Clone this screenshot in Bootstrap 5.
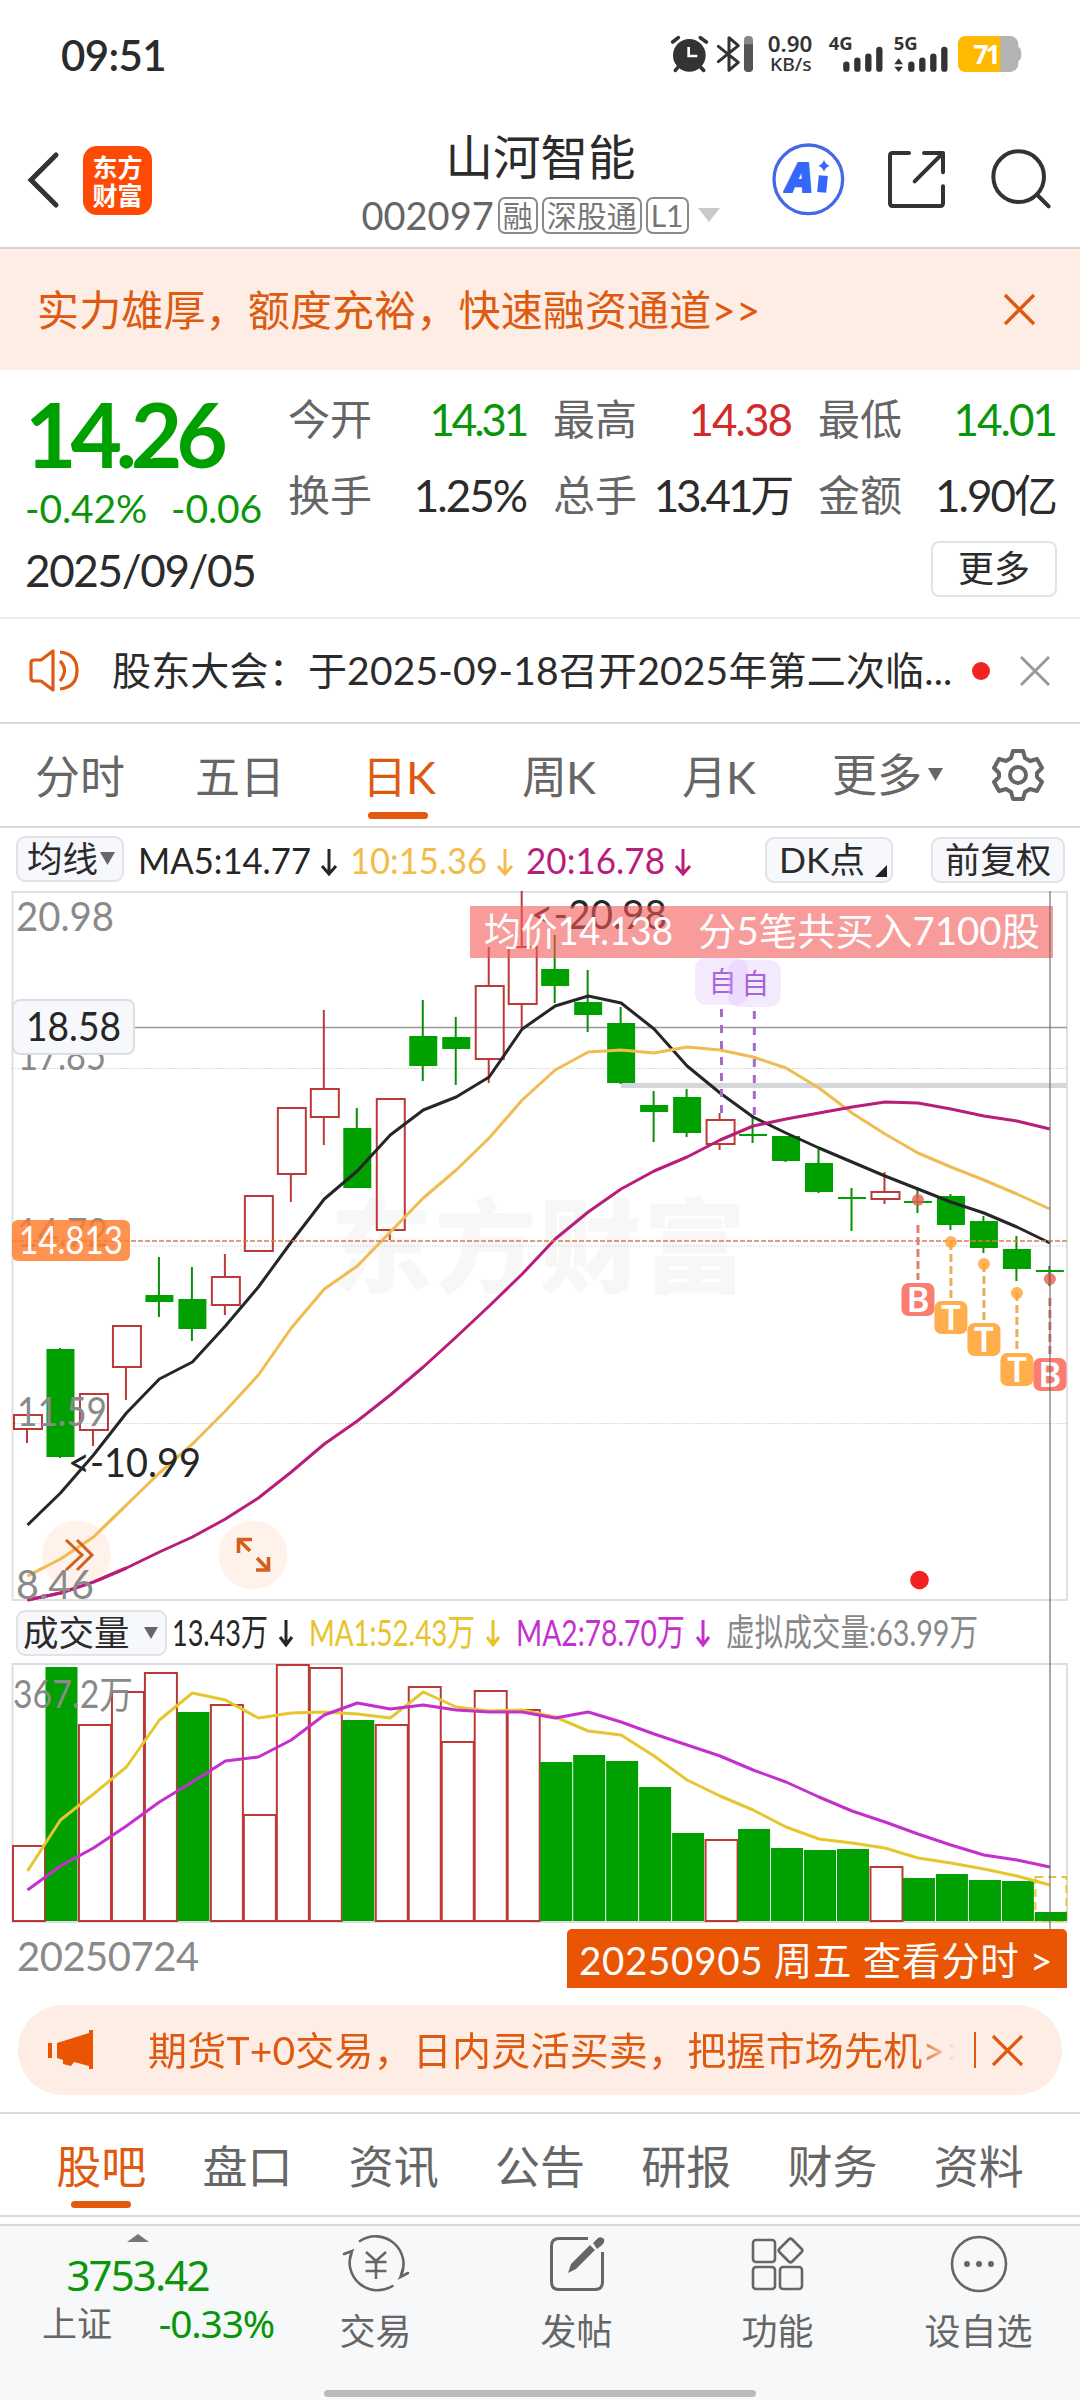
<!DOCTYPE html>
<html lang="zh-CN">
<head>
<meta charset="utf-8">
<meta name="viewport" content="width=device-width, initial-scale=1">
<title>山河智能 002097</title>
<link rel="stylesheet" href="https://cdn.jsdelivr.net/npm/bootstrap@5.3.0/dist/css/bootstrap.min.css">
<style>
:root{--up:#d32b2b;--down:#0a960a;--brand:#de5a11;--ink:#2b2b2b;--dim:#666;--line:#d9d9d9;--soft:#fdede4}
body{width:1080px;height:2400px;overflow:hidden;background:#fff;color:var(--ink);font-family:Lato,"Noto Sans CJK SC",sans-serif;font-size:42px;line-height:1;white-space:nowrap}
svg{display:block;flex:none;overflow:visible}
.down{color:var(--down)}.up{color:var(--up)}.dim{color:var(--dim)}.brand{color:var(--brand)}
.statusbar{height:109px;padding:0 59px 0 61px}
.clock{font-weight:600;font-size:42px;letter-spacing:-.6px}
.titlebar{height:140px;padding-top:4px;border-bottom:2px solid #d3d3d3}
.logo{width:69px;height:69px;border-radius:14px;background:#ff4a05;color:#fff;font:700 25px/28px "Noto Sans CJK SC",sans-serif;margin-left:23px}
.stock-name{font-size:47.5px;line-height:64px}
.code-row{font-size:38px;line-height:40px;height:40px;color:var(--dim)}
.mini-tag{border:2px solid #8a8a8a;border-radius:7px;height:37px;font-size:30px;line-height:32px;padding:0 3px;margin-left:4px;color:#777}
.promo{height:121px;background:var(--soft);font-size:42px;letter-spacing:.15px;padding:0 44px 0 37px}
.quote{height:249px;border-bottom:2px solid #ececec;padding:20px 24px 0 25px}
.big-price{font-size:89px;font-weight:700;line-height:88px;letter-spacing:-6.2px;color:#00a000}
.change{font-size:39px;line-height:60px;letter-spacing:-.1px}
.day{font-size:44px;line-height:64px;letter-spacing:-1.35px}
.facts{width:768px;margin-top:-9px}
.fact{width:238px;font-size:44px;line-height:76px;letter-spacing:-2px}
.fact .tight{letter-spacing:-3.2px}
.fact .dim{font-size:42px;letter-spacing:0}
.more-btn{width:126px;height:56px;border:2px solid #e2e2e2;border-radius:8px;font-size:36px;line-height:50px;text-align:center;color:var(--ink);margin:8px -1px 0 0}
.notice{height:105px;border-bottom:2px solid var(--line);padding:0 29px;font-size:39px}
.dot{width:18px;height:18px;border-radius:50%;background:#f02222}
.periods{height:104px;border-bottom:2px solid var(--line);font-size:45px;color:var(--dim);padding-left:35px}
.period{height:100%;line-height:106px;position:relative}
.active-tab{color:var(--brand)}
.active-tab::after{content:"";position:absolute;left:50%;margin-left:-30px;bottom:7px;width:60px;height:7px;border-radius:4px;background:#e35a0e}
.legend-row{height:63px;padding:0 15px 0 16px}
.chip{background:#f6f8fb;border:2px solid #e0e3e7;border-radius:9px;height:46px;line-height:42px;font-size:35.5px;color:var(--ink)}
.crosshair{position:absolute;left:1049px;top:63px;width:2px;height:1038px;background:rgba(100,100,100,.55)}
.dates{height:68px;padding:7px 13px 0 17px;font-size:40px;color:#8a8a8a}
.day-link{width:500px;height:59px;background:#ea5504;color:#fff;border-radius:5px 5px 0 0;font-size:38.5px;line-height:62px;letter-spacing:.7px;padding-left:12px;white-space:pre}
.futures{height:90px;margin:15px 18px 17px;background:var(--soft);border-radius:45px;padding-left:29px}
.fade-text{width:812px;overflow:hidden;font-size:39px;letter-spacing:.2px;line-height:90px;-webkit-mask-image:linear-gradient(90deg,#000 768px,transparent 808px);mask-image:linear-gradient(90deg,#000 768px,transparent 808px)}
.sections{height:105px;border-top:2px solid var(--line);border-bottom:2px solid var(--line);font-size:45px;color:var(--dim);padding:0 28px;margin-bottom:7px}
.section-tab{flex:1;text-align:center;line-height:106px;position:relative}
.dock{height:176px;background:#f7f8fa;border-top:2px solid #d6d8da;color:var(--dim);position:relative}
.index{width:275px;font-family:"Noto Sans","Noto Sans CJK SC",sans-serif}
.index-value{font-size:42px;line-height:48px;letter-spacing:-1.9px;margin-top:9px}
.index-sub{font-size:35px;line-height:50px;padding:0 1px 0 42px}
.index-sub .down{font-size:39px;letter-spacing:-1.2px;margin-top:-2px}
.dock-item{width:201px;font-size:36px;padding-top:8px}
.dock-item span{margin-top:15px;line-height:44px}
.homebar{position:absolute;left:324px;bottom:3px;width:432px;height:7px;border-radius:4px;background:#b9bbbd}
</style>
</head>
<body>
<div class="statusbar d-flex justify-content-between align-items-center">
  <div class="clock">09:51</div>
  <svg width="380" height="60" viewBox="0 0 1140 180" style="margin-right:-20px" fill="#333">
    <circle cx="85" cy="91" r="49"/><path d="M35 51L52 38M118 38L136 51M50 128L43 136M120 128L128 136" stroke="#333" stroke-width="11" stroke-linecap="round"/><path d="M83 66V93H109" fill="none" stroke="#fff" stroke-width="8"/>
    <path d="M172 64L232 112L204 136V38L232 62L172 110" fill="none" stroke="#333" stroke-width="9" stroke-linejoin="round" stroke-linecap="round"/>
    <rect x="249" y="33" width="27" height="108" rx="12" fill="#888"/><path d="M249 58H276V129Q276 141 262 141Q249 141 249 129Z" fill="#555"/>
    <g font-family="Noto Sans" font-weight="600"><text x="320" y="80" font-size="62" textLength="134" lengthAdjust="spacingAndGlyphs">0.90</text><text x="327" y="137" font-size="56" font-weight="500" textLength="125" lengthAdjust="spacingAndGlyphs">KB/s</text>
    <text x="503" y="74" font-size="54" font-weight="700" textLength="72" lengthAdjust="spacingAndGlyphs">4G</text><text x="698" y="74" font-size="54" font-weight="700" textLength="72" lengthAdjust="spacingAndGlyphs">5G</text></g>
    <g stroke="#333" stroke-width="19" stroke-linecap="round"><path d="M556 119V131M589 107V131M622 95V131M655 75V131M751 119V131M784 107V131M817 95V131M850 75V131"/></g>
    <path d="M700 118L713 100L726 118ZM700 125L713 141L726 125Z"/>
    <rect x="891" y="33" width="181" height="108" rx="25" fill="#b3b3b3"/><path d="M1070 66Q1081 66 1081 87Q1081 108 1070 108Z" fill="#b3b3b3"/><path d="M1018 33V141H916Q891 141 891 116V58Q891 33 916 33Z" fill="#ffb900"/>
    <text x="937" y="116" font-family="Noto Sans" font-size="80" font-weight="700" fill="#fff" textLength="82">71</text>
  </svg>
</div>

<header class="titlebar d-flex align-items-center">
  <div class="d-flex align-items-center" style="width:363px">
    <svg width="33" height="56" viewBox="0 0 33 56" style="margin-left:27px"><path d="M29 3L4 28L29 53" fill="none" stroke="#333" stroke-width="5" stroke-linecap="round"/></svg>
    <div class="logo text-center d-flex flex-column justify-content-center"><span>东方</span><span>财富</span></div>
  </div>
  <div class="d-flex flex-column align-items-center" style="width:355px">
    <div class="stock-name">山河智能</div>
    <div class="code-row d-flex align-items-center" style="margin-top:6px"><span>002097</span><span class="mini-tag">融</span><span class="mini-tag">深股通</span><span class="mini-tag">L1</span>
      <svg width="22" height="16" style="margin-left:9px"><path d="M0 1H22L11 15Z" fill="#c9c9c9"/></svg></div>
  </div>
  <svg width="320" height="95" viewBox="0 0 960 285" style="margin-left:32px" fill="none" stroke="#333" stroke-width="12" stroke-linecap="round" stroke-linejoin="round">
    <circle cx="175" cy="139" r="103" stroke="#4468e8" stroke-width="10"/>
    <text x="109" y="178" font-family="Open Sans" font-size="122" font-weight="800" font-style="italic" fill="#3468fa" stroke="#3468fa" stroke-width="6" textLength="80" lengthAdjust="spacingAndGlyphs">A</text>
    <path d="M220 128L215 178" stroke="#3468fa" stroke-width="27" stroke-linecap="butt"/><path d="M222 80Q226 94 239 98Q226 102 222 116Q218 102 205 98Q218 94 222 80Z" fill="#3468fa" stroke="none"/>
    <path d="M477 60H428Q420 60 420 68V211Q420 219 428 219H571Q579 219 579 211V160M522 60H579V118M576 63L494 145"/>
    <circle cx="806" cy="131" r="76"/><path d="M862 186L896 220"/>
  </svg>
</header>

<div class="promo d-flex align-items-center justify-content-between brand"><span>实力雄厚，额度充裕，快速融资通道&gt;&gt;</span>
  <svg width="33" height="33" viewBox="0 0 33 33"><path d="M2 2L31 31M31 2L2 31" stroke="#de5a11" stroke-width="3.4"/></svg></div>

<section class="quote d-flex justify-content-between">
  <div>
    <div class="big-price">14.26</div>
    <div class="change down d-flex"><span style="width:146px">-0.42%</span><span>-0.06</span></div>
    <div class="day">2025/09/05</div>
  </div>
  <div class="facts d-flex flex-column align-items-end">
    <div class="d-flex justify-content-between w-100"><div class="fact d-flex justify-content-between"><span class="dim">今开</span><span class="down tight">14.31</span></div><div class="fact d-flex justify-content-between"><span class="dim">最高</span><span class="up">14.38</span></div><div class="fact d-flex justify-content-between"><span class="dim">最低</span><span class="down">14.01</span></div></div>
    <div class="d-flex justify-content-between w-100"><div class="fact d-flex justify-content-between"><span class="dim">换手</span><span>1.25%</span></div><div class="fact d-flex justify-content-between"><span class="dim">总手</span><span class="tight">13.41万</span></div><div class="fact d-flex justify-content-between"><span class="dim">金额</span><span>1.90亿</span></div></div>
    <div class="more-btn">更多</div>
  </div>
</section>

<div class="notice d-flex align-items-center">
  <svg width="51" height="43" viewBox="0 0 51 43" fill="none" stroke="#de5a11" stroke-width="3.2" stroke-linejoin="round"><path d="M24 2V41L12 32H5Q2 32 2 29V14Q2 11 5 11H12ZM31 12Q40 21 31 32M31 3Q48 5 48 21.500Q48 38 31 40"/></svg>
  <span style="width:840px;margin-left:32px;letter-spacing:.18px">股东大会：于2025-09-18召开2025年第二次临...</span>
  <span class="dot" style="margin-left:20px"></span>
  <svg width="30" height="30" style="margin-left:30px"><path d="M1 1L29 29M29 1L1 29" stroke="#999" stroke-width="3"/></svg>
</div>

<nav class="periods d-flex">
  <span class="period" style="width:160px">分时</span><span class="period" style="width:167px">五日</span>
  <span style="width:160px"><span class="period active-tab d-inline-block" style="letter-spacing:-1px">日K</span></span>
  <span class="period" style="width:160px;letter-spacing:-1px">周K</span><span class="period" style="width:150px;letter-spacing:-1px">月K</span>
  <span class="period d-flex align-items-center" style="width:161px">更多<svg width="15" height="14" style="margin-left:6px"><path d="M0 0H15L7.500 13Z" fill="#666"/></svg></span>
  <svg class="align-self-center" width="50" height="52" viewBox="-25 -26 50 52" fill="none" stroke="#666" stroke-width="4" stroke-linejoin="round"><path d="M-5 -24H5L7 -17L12 -14L19 -16L24 -7L19 -2V2L24 7L19 16L12 14L7 17L5 24H-5L-7 17L-12 14L-19 16L-24 7L-19 2V-2L-24 -7L-19 -16L-12 -14L-7 -17Z"/><circle r="8"/></svg>
</nav>

<main class="position-relative">
  <div class="legend-row d-flex align-items-center">
    <div class="chip d-flex align-items-center" style="width:108px;padding-left:9px;margin-top:-2px">均线<svg width="15" height="13" style="margin-left:2px"><path d="M0 0H15L7.500 13Z" fill="#666"/></svg></div>
    <svg class="me-auto" style="margin-left:7px" width="560" height="46" viewBox="131 836 560 46" font-family="Lato" font-size="37.500"><g><text x="138" y="873" textLength="173" lengthAdjust="spacingAndGlyphs" fill="#262626">MA5:14.77</text><text x="350" y="873" textLength="137" lengthAdjust="spacingAndGlyphs" fill="#f2bb4c">10:15.36</text><text x="526" y="873" textLength="139" lengthAdjust="spacingAndGlyphs" fill="#b91d7a">20:16.78</text></g>
      <g fill="none" stroke-width="3"><path d="M329 848V873M322 865L329 873L336 865" stroke="#262626"/><path d="M505 848V873M498 865L505 873L512 865" stroke="#f2bb4c"/><path d="M683 848V873M676 865L683 873L690 865" stroke="#b91d7a"/></g></svg>
    <div class="chip d-flex align-items-end" style="width:128px;padding-left:12px"><span>DK点</span><svg width="12" height="12" style="margin:0 0 4px 10px"><path d="M12 0V12H0Z" fill="#222"/></svg></div>
    <div class="chip text-center" style="width:134px;margin-left:38px">前复权</div>
  </div>
  <svg id="kline" width="1080" height="714" viewBox="0 891 1080 714" font-family="Lato,'Noto Sans CJK SC'"></svg>
  <div class="d-flex align-items-center" style="height:58px;padding:0 16px 2px">
    <div class="chip d-flex align-items-center" style="width:151px;padding-left:5px">成交量<svg width="14" height="12" style="margin-left:14px"><path d="M0 0H14L7 12Z" fill="#666"/></svg></div>
    <svg width="820" height="46" viewBox="168 1610 820 46" font-family="Lato,'Noto Sans CJK SC'" font-size="37"><text x="173" y="1646" textLength="96" lengthAdjust="spacingAndGlyphs" fill="#262626">13.43万</text><text x="310" y="1646" textLength="166" lengthAdjust="spacingAndGlyphs" fill="#e8c329">MA1:52.43万</text><text x="517" y="1646" textLength="169" lengthAdjust="spacingAndGlyphs" fill="#c42fce">MA2:78.70万</text><text x="727" y="1646" textLength="252" lengthAdjust="spacingAndGlyphs" fill="#888">虚拟成交量:63.99万</text>
      <g fill="none" stroke-width="3"><path d="M287 1620V1645M281 1637L287 1645L293 1637" stroke="#262626"/><path d="M494 1620V1645M488 1637L494 1645L500 1637" stroke="#e8c329"/><path d="M704 1620V1645M698 1637L704 1645L710 1637" stroke="#c42fce"/></g></svg>
  </div>
  <svg id="volume" width="1080" height="259" viewBox="0 1663 1080 259" font-family="Lato,'Noto Sans CJK SC'"></svg>
  <div class="crosshair"></div>
  <div class="dates d-flex justify-content-between"><span style="line-height:54px;letter-spacing:-.5px">20250724</span><div class="day-link">20250905 周五 查看分时 &gt;</div></div>
</main>

<div class="futures d-flex align-items-center brand">
  <svg width="46" height="40" viewBox="0 0 46 40"><path d="M1 13H5V28H1ZM10 13L42 3V0H46V39H42V36L27 32L24 36L16 34V30L10 28Z" fill="#ea5504"/></svg>
  <div class="fade-text" style="margin-left:55px">期货T+0交易，日内灵活买卖，把握市场先机&gt;&gt;</div>
  <div style="width:2px;height:36px;background:#de5a11;margin-left:14px"></div>
  <svg width="31" height="31" style="margin-left:16px"><path d="M1 1L30 30M30 1L1 30" stroke="#de5a11" stroke-width="3.200"/></svg>
</div>

<nav class="sections d-flex"><span class="section-tab active-tab">股吧</span><span class="section-tab">盘口</span><span class="section-tab">资讯</span><span class="section-tab">公告</span><span class="section-tab">研报</span><span class="section-tab">财务</span><span class="section-tab">资料</span></nav>

<footer class="dock d-flex">
  <div class="index">
    <svg class="mx-auto" width="22" height="8" style="margin-top:8px"><path d="M0 8L11 0L22 8Z" fill="#777"/></svg>
    <div class="index-value down text-center">3753.42</div>
    <div class="index-sub d-flex justify-content-between align-items-center"><span>上证</span><span class="down">-0.33%</span></div>
  </div>
  <div class="dock-item d-flex flex-column align-items-center">
    <svg width="66" height="60" viewBox="-33 -30 66 60" fill="none" stroke="#666" stroke-width="2.600" stroke-linecap="round"><path d="M-16 -23A28 28 0 0 1 24.500 13L32 9M24.500 13L27 4M16.500 22A28 28 0 0 1 -24 -13L-32 -10M-24 -13L-26 -5"/><path d="M-10 -12L0 -3L10 -12M-10.500 -2H10.500M-10.500 7H10.500M0 -2V15" stroke-linecap="butt"/></svg><span>交易</span></div>
  <div class="dock-item d-flex flex-column align-items-center">
    <svg width="54" height="60" viewBox="550 2234 54 60" fill="none" stroke="#666" stroke-width="3"><path d="M588 2238.500H559Q551.500 2238.500 551.500 2246V2282Q551.500 2289.500 559 2289.500H595Q602.500 2289.500 602.500 2282V2252"/><path d="M568 2273L571 2264L590 2245L595 2250L576 2269ZM593 2243L598 2238Q601 2236 604 2239Q605 2242 602 2245L597 2249Z" fill="#666" stroke="none"/></svg><span>发帖</span></div>
  <div class="dock-item d-flex flex-column align-items-center">
    <svg width="52" height="60" viewBox="753 2234 52 60" fill="none" stroke="#666" stroke-width="2.600"><rect x="754" y="2240" width="22" height="22" rx="3"/><rect x="754" y="2267" width="22" height="22" rx="3"/><rect x="781" y="2267" width="22" height="22" rx="3"/><rect x="782.500" y="2241.500" width="18" height="18" rx="2.500" transform="rotate(45 791.500 2250.500)"/></svg><span>功能</span></div>
  <div class="dock-item d-flex flex-column align-items-center">
    <svg width="60" height="60" viewBox="-30 -30 60 60"><circle r="27" fill="none" stroke="#666" stroke-width="2.600"/><g fill="#666"><circle cx="-12" r="3"/><circle r="3"/><circle cx="12" r="3"/></g></svg><span>设自选</span></div>
  <div class="homebar"></div>
</footer>

<script src="https://cdn.jsdelivr.net/npm/bootstrap@5.3.0/dist/js/bootstrap.bundle.min.js"></script>
<script>
const RED='#bb3a38', GREEN='#00a000';
const cx=i=>27.5+i*32.98;
// each candle: direction, body top, body bottom, wick top, wick bottom
const candles=[['r',1414,1429,1414,1443],['g',1349,1457,1348,1458],['r',1393,1430,1393,1446],['r',1325,1367,1325,1400],['g',1295,1302,1257,1317],['g',1299,1329,1267,1341],['r',1276,1305,1254,1315],['r',1195,1251,1195,1251],['r',1107,1174,1107,1202],['r',1088,1117,1010,1145],['g',1128,1188,1108,1188],['r',1098,1230,1098,1240],['g',1036,1066,1000,1081],['g',1037,1049,1017,1085],['r',985,1059,947,1083],['r',946,1004,891,1028],['g',969,986,935,1003],['g',1002,1015,970,1032],['g',1023,1083,1007,1084],['g',1105,1112,1091,1142],['g',1097,1133,1089,1137],['r',1119,1144,1113,1150],['g',1134,1136,1117,1143],['g',1136,1161,1136,1162],['g',1163,1192,1148,1193],['g',1197,1199,1188,1231],['r',1191,1199,1172,1204],['g',1201,1203,1187,1213],['g',1196,1225,1194,1230],['g',1221,1248,1216,1253],['g',1249,1269,1236,1281],['g',1270,1272,1266,1286]];
const ma5=[1525,1493,1455,1413,1379,1362,1326,1287,1242,1199,1171,1135,1110,1097,1077,1029,1006,996,1003,1029,1066,1093,1117,1133,1148,1162,1176,1189,1202,1213,1227,1243];
const ma10=[1576,1559,1537,1505,1473,1444,1411,1375,1328,1289,1266,1232,1198,1170,1138,1100,1070,1052,1050,1053,1047,1050,1057,1068,1088,1113,1134,1153,1167,1180,1194,1209];
const ma20=[1600,1593,1582,1568,1552,1537,1519,1498,1472,1444,1421,1395,1367,1337,1306,1274,1239,1212,1189,1171,1157,1140,1126,1119,1113,1107,1102,1103,1109,1116,1121,1129];
const vols=[1845,1667,1724,1691,1672,1712,1704,1814,1664,1667,1720,1724,1686,1741,1690,1709,1762,1755,1761,1787,1833,1839,1829,1848,1850,1849,1866,1878,1874,1880,1881,1912];
const risingVols=new Set([0,2,3,4,6,7,8,9,11,12,13,14,15,21,26]);
const vma1=[1871,1820,1794,1767,1720,1693,1700,1718,1713,1712,1714,1718,1692,1707,1711,1710,1717,1731,1735,1756,1780,1796,1810,1827,1839,1843,1848,1858,1863,1869,1876,1885];
const vma2=[1890,1866,1848,1826,1802,1782,1761,1757,1740,1715,1703,1709,1705,1710,1712,1712,1718,1712,1722,1734,1745,1756,1770,1782,1797,1811,1822,1834,1845,1855,1860,1867];
const line=(x1,y1,x2,y2,c,w=2,d='')=>`<line x1="${x1}" y1="${y1}" x2="${x2}" y2="${y2}" stroke="${c}" stroke-width="${w}" stroke-dasharray="${d}"/>`;
const box=(x,y,w,h,f,s='none',r=0)=>`<rect x="${x}" y="${y}" width="${w}" height="${h}" fill="${f}" stroke="${s}" stroke-width="2" rx="${r}"/>`;
const label=(x,y,t,w,c,fs=41)=>`<text x="${x}" y="${y}" font-size="${fs}" fill="${c}" textLength="${w}" lengthAdjust="spacingAndGlyphs" xml:space="preserve">${t}</text>`;
const curve=(a,c,w=3)=>`<polyline fill="none" stroke="${c}" stroke-width="${w}" stroke-linejoin="round" points="${a.map((y,i)=>cx(i).toFixed(1)+','+y).join(' ')}"/>`;

let k=box(12.5,892,1054.5,708,'none','#e0e0e0');
k+=`<text x="330" y="1285" font-size="102" font-weight="900" fill="#f7f7f7" textLength="416">东方财富</text>`;
[1068.5,1246,1423.5].forEach(y=>k+=line(12,y,1067,y,'#cfcfcf',1,'1.5 1.5'));
k+=line(621,1085.500,1067,1085.500,'#d3d7dc',5)+line(12,1027.500,1067,1027.500,'#999',1.600);
candles.forEach(([d,t,b,h,l],i)=>{const x=cx(i);
  if(d==='r'){if(h<t)k+=line(x-.5,h,x-.5,t,RED);if(l>b)k+=line(x-.5,b,x-.5,l,RED);k+=box(x-13.500,t+1,28,b-t-1,'none',RED)}
  else k+=line(x-.5,h,x-.5,l,'#078f07')+box(x-14,t,28,Math.max(b-t,2),GREEN)});
k+=curve(ma5,'#262626')+curve(ma10,'#f0bc50')+curve(ma20,'#b91d7a');
[76.5,253].forEach(x=>k+=`<circle cx="${x}" cy="1555" r="34.500" fill="#fff0e8" fill-opacity=".85"/>`);
k+=curve(ma10.slice(0,4),'#f0bc50')+curve(ma20.slice(0,4),'#b91d7a');
k+=label(16,931,'20.98',98,'#8a8a8a')+label(18,1070,'17.85',88,'#8a8a8a')+label(17,1247,'14.72',91,'#8a8a8a')+label(17,1426,'11.59',90,'#8a8a8a')+label(16,1599,'8.46',78,'#8a8a8a');
k+=label(531,929,'&lt;-20.98',136,'#262626')+label(68,1477,'&lt;-10.99',133,'#262626');
k+=line(12,1241,1067,1241,'#dc7c48',1.500,'5 2');
k+=box(470,906,583,52,'rgba(244,88,88,.6)')+label(484,945,'均价14.138',189,'#fff',38)+label(698,945,'分5笔共买入7100股',342,'#fff',38);
[[721.5,958,1009,1113],[754.3,960,1011,1116]].forEach(([x,y,a,b])=>{k+=box(x-26.500,y,53,47,'rgba(214,180,250,.28)','none',11)+`<text x="${x+1}" y="${y+34}" text-anchor="middle" font-size="28" fill="#a665dc">自</text>`+line(x,a,x,b,'#a26bd0',3,'8 8')});
[['B',27,1280,1200,1225],['T',28,1298,1242,1242],['T',29,1320,1264,1264],['T',30,1350,1293,1293],['B',31,1355,1279,1298]].forEach(([t,i,y,d,a])=>{
  const x=cx(i),c=t==='B'?'#f97d70':'#ffae4b',s=t==='B'?'#e07f72':'#e8ae5c';
  k+=line(x,a,x,y,s,3,'8 4')+`<circle cx="${x}" cy="${d}" r="6" fill="${t==='B'?'#ea5f4c':'#ffa033'}" fill-opacity=".8"/>`+box(x-16.500,y+3,33,33,c,'none',7)+`<text x="${x}" y="${y+32}" font-size="35" font-family="Noto Sans" font-weight="600" fill="#fff" text-anchor="middle">${t}</text>`});
k+=box(13,1000,121,54,'#f6f8fb','#dcdfe2',7)+label(26,1041,'18.58',95,'#262626');
k+=box(12,1220,118,41,'rgba(255,125,45,.84)','none',6)+label(19,1254,'14.813',104,'#fff',39);
k+=`<g fill="none" stroke="#d4601f" stroke-width="3"><path d="M66 1540L82 1555L66 1570M77 1540L92 1555L77 1570"/><path d="M252 1539.500H238.500V1553M238.500 1539.500L250 1551M256 1570H268.500V1557M268.500 1570L257 1558" stroke-width="3.600"/></g>`;
k+='<circle cx="919.500" cy="1580" r="9.300" fill="#f02222"/>';
document.getElementById('kline').innerHTML=k;

let v=box(12.5,1664,1054.5,258,'none','#dedede');
vols.forEach((t,i)=>{const x=12+i*32.98,last=i===31;
  if(last)v+=`<rect x="${x+1}" y="1877" width="31" height="44" fill="none" stroke="#e8c53c" stroke-width="2" stroke-dasharray="8 5"/>`;
  v+=risingVols.has(i)?box(x+1,t+1,32,1920-t,'#fff',RED):box(x+.5,t,32,1921-t,GREEN)});
v+=curve(vma1,'#e6c62f')+curve(vma2,'#c42fce')+label(13,1708,'367.2万',120,'#8a8a8a',38);
document.getElementById('volume').innerHTML=v;
</script>
</body>
</html>
